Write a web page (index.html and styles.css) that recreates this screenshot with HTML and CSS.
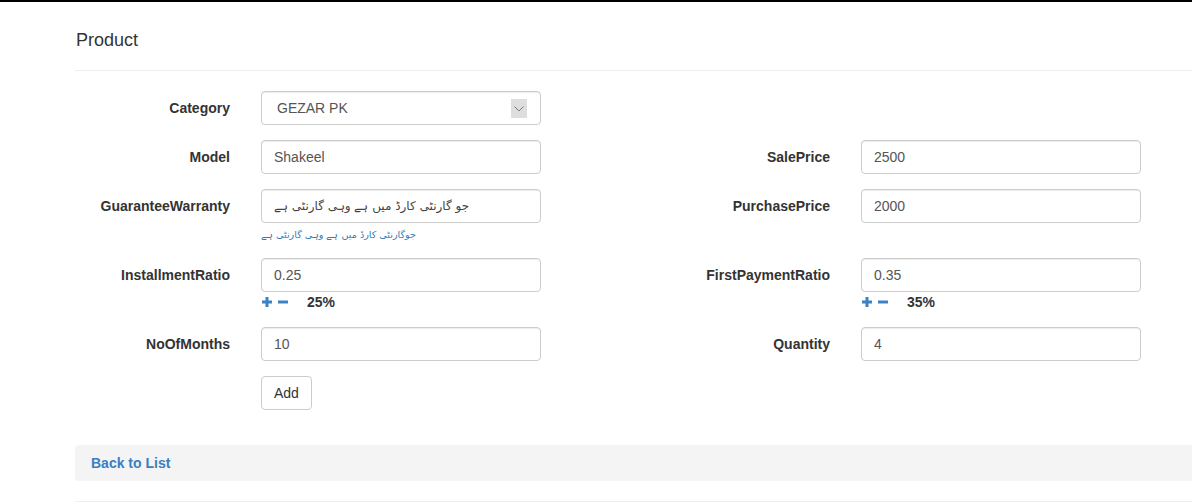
FILE: index.html
```html
<!DOCTYPE html>
<html lang="en">
<head>
<meta charset="utf-8">
<title>Product</title>
<link rel="stylesheet" href="styles.css">
</head>
<body>
<div class="page">
  <h4 class="title">Product</h4>
  <form class="form">
    <div class="form-row">
      <div class="field">
        <label class="label">Category</label>
        <div class="control">
          <div class="select">
            <span class="select-text">GEZAR PK</span>
            <span class="select-arrow">
              <svg width="16" height="19" viewBox="0 0 16 19"><path d="M3.5 7.5 L8 12 L12.5 7.5" fill="none" stroke="#7a7a7a" stroke-width="1"/></svg>
            </span>
          </div>
        </div>
      </div>
      <div class="field"></div>
    </div>

    <div class="form-row">
      <div class="field">
        <label class="label">Model</label>
        <div class="control"><input class="input" type="text" value="Shakeel"></div>
      </div>
      <div class="field">
        <label class="label">SalePrice</label>
        <div class="control"><input class="input" type="text" value="2500"></div>
      </div>
    </div>

    <div class="form-row">
      <div class="field">
        <label class="label">GuaranteeWarranty</label>
        <div class="control">
          <input class="input urdu" type="text" value="جو گارنٹی کارڈ میں ہے وہی گارنٹی ہے">
          <div class="help">جوگارنٹی کارڈ میں ہے وہی گارنٹی ہے</div>
        </div>
      </div>
      <div class="field">
        <label class="label">PurchasePrice</label>
        <div class="control"><input class="input" type="text" value="2000"></div>
      </div>
    </div>

    <div class="form-row">
      <div class="field">
        <label class="label">InstallmentRatio</label>
        <div class="control">
          <input class="input" type="text" value="0.25">
          <div class="ratio">
            <svg class="icon" width="10" height="10" viewBox="0 0 10 10"><path d="M0 5 H10 M5 0 V10" stroke="#3b82c4" stroke-width="3"/></svg>
            <svg class="icon minus" width="10" height="10" viewBox="0 0 10 10"><path d="M0 5 H10" stroke="#3b82c4" stroke-width="3"/></svg>
            <span class="pct">25%</span>
          </div>
        </div>
      </div>
      <div class="field">
        <label class="label">FirstPaymentRatio</label>
        <div class="control">
          <input class="input" type="text" value="0.35">
          <div class="ratio">
            <svg class="icon" width="10" height="10" viewBox="0 0 10 10"><path d="M0 5 H10 M5 0 V10" stroke="#3b82c4" stroke-width="3"/></svg>
            <svg class="icon minus" width="10" height="10" viewBox="0 0 10 10"><path d="M0 5 H10" stroke="#3b82c4" stroke-width="3"/></svg>
            <span class="pct">35%</span>
          </div>
        </div>
      </div>
    </div>

    <div class="form-row">
      <div class="field">
        <label class="label">NoOfMonths</label>
        <div class="control"><input class="input" type="text" value="10"></div>
      </div>
      <div class="field">
        <label class="label">Quantity</label>
        <div class="control"><input class="input" type="text" value="4"></div>
      </div>
    </div>

    <div class="form-row last">
      <div class="field">
        <span class="label"></span>
        <div class="control"><button class="btn" type="button">Add</button></div>
      </div>
    </div>
  </form>

  <div class="back-bar"><a class="back" href="#">Back to List</a></div>
  <div class="footer-line"></div>
</div>
</body>
</html>
```

FILE: styles.css
```css
* { box-sizing: border-box; }

html, body {
  margin: 0;
  padding: 0;
  background: #fff;
  overflow: hidden;
}

body {
  border-top: 2px solid #000;
  font-family: "Liberation Sans", Arial, "DejaVu Sans", sans-serif;
  font-size: 14px;
  line-height: 20px;
  color: #333;
}

.page {
  margin-left: 75px;
}

.title {
  margin: 0;
  padding: 28px 0 20px 1px;
  font-size: 18px;
  font-weight: normal;
  line-height: 20px;
  color: #333;
  border-bottom: 1px solid #eee;
}

.form {
  margin: 20px 0 0;
}

.form-row {
  display: flex;
  margin-bottom: 15px;
}

.form-row.last {
  margin-bottom: 0;
}

.field {
  width: 600px;
  display: flex;
  flex-shrink: 0;
}

.label {
  width: 155px;
  margin-right: 31px;
  padding-top: 7px;
  text-align: right;
  font-weight: bold;
  font-size: 14px;
  line-height: 20px;
  color: #333;
}

.control {
  width: 280px;
}

.input, .select {
  display: block;
  width: 280px;
  height: 34px;
  padding: 6px 12px;
  border: 1px solid #ccc;
  border-radius: 4px;
  font-family: "Liberation Sans", Arial, "DejaVu Sans", sans-serif;
  font-size: 14px;
  line-height: 20px;
  color: #555;
  background: #fff;
  box-shadow: inset 0 1px 1px rgba(0,0,0,.075);
}

.select {
  display: flex;
  align-items: center;
  justify-content: space-between;
  padding: 0 12px 0 15px;
}

.select-text {
  color: #555;
}

.select-arrow {
  display: flex;
  align-items: center;
  justify-content: center;
  width: 16px;
  height: 19px;
  margin-right: 1px;
  background: #dedede;
}

.urdu {
  font-family: "DejaVu Sans", "Liberation Sans", sans-serif;
  font-size: 12px;
  color: #444;
}

.help {
  margin-top: 4px;
  height: 16px;
  font-family: "DejaVu Sans", "Liberation Sans", sans-serif;
  font-size: 9.6px;
  line-height: 16px;
  color: #337ab7;
}

.ratio {
  display: flex;
  align-items: center;
  height: 20px;
  padding-left: 1px;
}

.icon {
  display: block;
}

.minus {
  margin-left: 6px;
}

.pct {
  margin-left: 19px;
  font-weight: bold;
  font-size: 14px;
  color: #333;
}

.btn {
  display: block;
  height: 34px;
  padding: 6px 12px;
  border: 1px solid #ccc;
  border-radius: 4px;
  background: #fff;
  font-family: "Liberation Sans", Arial, sans-serif;
  font-size: 14px;
  line-height: 20px;
  color: #333;
}

.back-bar {
  margin-top: 35px;
  height: 36px;
  padding: 8px 16px;
  background: #f4f4f4;
  border-radius: 4px 0 0 4px;
}

.back {
  font-weight: bold;
  color: #3a7fc1;
  text-decoration: none;
  line-height: 20px;
}

.footer-line {
  margin-top: 20px;
  border-top: 1px solid #eee;
}
```
